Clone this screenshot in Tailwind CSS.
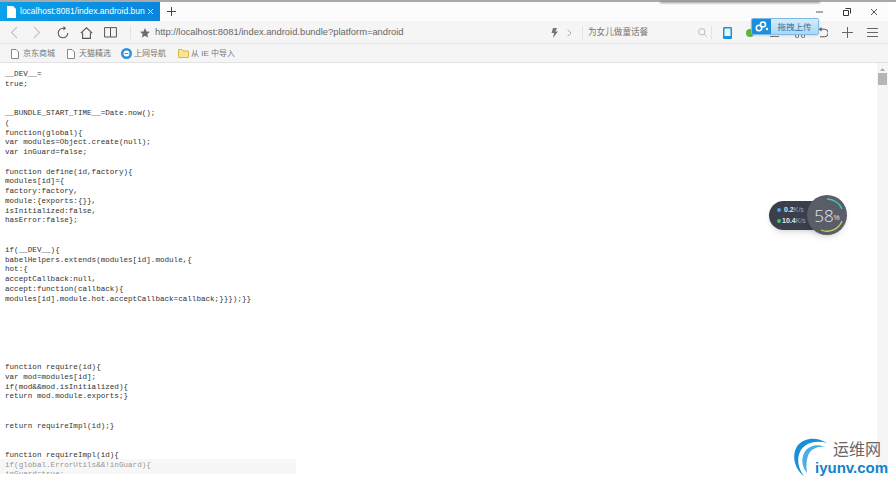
<!DOCTYPE html>
<html lang="en">
<head>
  <meta charset="UTF-8" />
  <title>localhost:8081/index.android.bundle</title>
  <script src="https://cdn.jsdelivr.net/npm/@tailwindcss/browser@4"></script>
</head>
<body class="relative w-[896px] h-[484px] overflow-hidden bg-white font-['Liberation_Sans','Noto_Sans_CJK_SC',sans-serif]">
  <!-- top edge -->
  <div class="h-[2px] bg-[#a9a9a9]"></div>
  <div class="w-[888px] h-[472px] flex flex-col overflow-hidden">

    <!-- tab bar -->
    <div class="h-[19px] shrink-0 flex items-center bg-[#fcfcfc]">
      <div class="w-[160px] h-full flex items-center pl-[7px] pr-[6px] bg-gradient-to-r from-[#0aa0ea] to-[#0a86dc] text-white">
        <svg class="w-[9px] h-[12px] shrink-0" viewBox="0 0 9 12"><path d="M0 0h6l3 3v9H0z" fill="#fff"/></svg>
        <span class="ml-[4px] w-[127px] overflow-hidden whitespace-nowrap text-[8.500px] leading-none">localhost:8081/index.android.bun</span>
        <svg class="ml-[2px] w-[7px] h-[7px] shrink-0" viewBox="0 0 7 7"><path d="M1 1l5 5M6 1L1 6" stroke="#cfe9fa" fill="none"/></svg>
      </div>
      <svg class="ml-[7px] w-[9px] h-[9px]" viewBox="0 0 9 9"><path d="M4.500 0v9M0 4.500h9" stroke="#444" fill="none"/></svg>
      <div class="ml-auto flex items-center text-[#444]">
        <svg class="w-[8px] h-[8px] mr-[19px]" viewBox="0 0 8 8"><path d="M0 4h7" stroke="#555" fill="none"/></svg>
        <svg class="w-[8px] h-[8px] mr-[19px]" viewBox="0 0 8 8"><path d="M2.500.5h5v5M.5 2.500h5v5h-5z" stroke="#333" fill="none"/></svg>
        <svg class="w-[8px] h-[8px] mr-[10px]" viewBox="0 0 8 8"><path d="M1 1l6 6M7 1L1 7" stroke="#555" fill="none"/></svg>
      </div>
    </div>

    <!-- address toolbar -->
    <div class="h-[23px] shrink-0 flex items-center pt-px bg-[#f5f5f5] border-b border-[#e4e4e4]">
      <svg class="ml-[10px] w-[8px] h-[13px]" viewBox="0 0 8 13"><path d="M7 1L1.500 6.500 7 12" stroke="#c6c6c6" stroke-width="1.200" fill="none"/></svg>
      <svg class="ml-[15px] w-[8px] h-[13px]" viewBox="0 0 8 13"><path d="M1 1l5.500 5.500L1 12" stroke="#c6c6c6" stroke-width="1.200" fill="none"/></svg>
      <svg class="ml-[16px] w-[12px] h-[13px]" viewBox="0 0 12 13"><path d="M10.800 7A4.800 4.800 0 1 1 6 2.200H8" stroke="#555" stroke-width="1.100" fill="none"/><path d="M6.500 0L9 2.200 6.500 4.400z" fill="#555"/></svg>
      <svg class="ml-[11px] w-[13px] h-[12px]" viewBox="0 0 13 12"><path d="M.8 6.200L6.500.8l5.700 5.400M2.600 5.400v6h7.800v-6" stroke="#555" stroke-width="1.100" fill="none"/></svg>
      <svg class="ml-[11px] w-[13px] h-[11px]" viewBox="0 0 13 11"><path d="M.6.6h5.900v9.400H.6zM6.500.6h5.900v9.400H6.500" stroke="#555" fill="none"/></svg>
      <div class="ml-[13px] w-px h-[13px] bg-[#e2e2e2]"></div>
      <svg class="ml-[9px] w-[10px] h-[10px]" viewBox="0 0 10 10"><path d="M5 0l1.500 3.400 3.500.3-2.700 2.300.8 3.600L5 7.700 1.900 9.600l.8-3.600L0 3.700l3.500-.3z" fill="#6a6a6a"/></svg>
      <span class="ml-[5px] w-[392px] text-[9.350px] leading-none whitespace-nowrap text-[#666]">http://localhost:8081/index.android.bundle?platform=android</span>
      <svg class="ml-[4px] w-[7px] h-[10px]" viewBox="0 0 7 10"><path d="M2 0h4L4.500 3.500H7L2 10l1-5H.5z" fill="#777"/></svg>
      <svg class="ml-[9px] w-[5px] h-[8px]" viewBox="0 0 5 8"><path d="M.6.6L4 4 .6 7.400" stroke="#aaa" fill="none"/></svg>
      <div class="ml-[10px] w-px h-[13px] bg-[#e2e2e2]"></div>
      <span class="ml-[5px] w-[110px] text-[8.600px] leading-none text-[#777]">为女儿做童话餐</span>
      <svg class="w-[9px] h-[9px]" viewBox="0 0 9 9"><circle cx="3.800" cy="3.800" r="3.200" stroke="#bbb" fill="none"/><path d="M6.200 6.200L8.700 8.700" stroke="#bbb" fill="none"/></svg>
      <div class="ml-[4px] w-px h-[13px] bg-[#e2e2e2]"></div>
      <svg class="ml-[11px] w-[9px] h-[12px]" viewBox="0 0 9 12"><rect width="9" height="12" rx="1.200" fill="#1596d8"/><rect x="1.500" y="1.500" width="6" height="7.500" fill="#e8f5fc"/></svg>
      <svg class="ml-[14px] w-[8px] h-[8px]" viewBox="0 0 8 8"><circle cx="4" cy="4" r="4" fill="#63b33a"/></svg>
      <svg class="ml-[64px] w-[10px] h-[11px]" viewBox="0 0 10 11"><path d="M3 2.200h3.500a3.500 3.500 0 0 1 0 7.600H2" stroke="#555" fill="none"/><path d="M3.500 0v4.400L.800 2.200z" fill="#555"/></svg>
      <svg class="ml-[14px] w-[11px] h-[11px]" viewBox="0 0 11 11"><path d="M5.500 0v11M0 5.500h11" stroke="#666" fill="none"/></svg>
      <svg class="ml-[14px] w-[11px] h-[9px]" viewBox="0 0 11 9"><path d="M0 .5h11M0 4.500h11M0 8.500h11" stroke="#666" fill="none"/></svg>
    </div>

    <!-- bookmarks -->
    <div class="h-[19px] shrink-0 flex items-center pt-px bg-[#f5f5f5] border-b border-[#e2e2e2] text-[8px] leading-none text-[#777]">
      <svg class="ml-[11px] w-[8px] h-[10px]" viewBox="0 0 8 10"><path d="M.5.500h4.500l2.500 2.500v6.500h-7z" stroke="#888" fill="#fff"/></svg>
      <span class="ml-[4px]">京东商城</span>
      <svg class="ml-[12px] w-[8px] h-[10px]" viewBox="0 0 8 10"><path d="M.5.500h4.500l2.500 2.500v6.500h-7z" stroke="#888" fill="#fff"/></svg>
      <span class="ml-[4px]">天猫精选</span>
      <svg class="ml-[10px] w-[11px] h-[11px]" viewBox="0 0 11 11"><circle cx="5.500" cy="5.500" r="5.500" fill="#2f8fd8"/><circle cx="5.500" cy="5.500" r="3" fill="#fff"/><path d="M3.500 5.500h4" stroke="#2f8fd8" fill="none"/></svg>
      <span class="ml-[2px]">上网导航</span>
      <svg class="ml-[12px] w-[11px] h-[9px]" viewBox="0 0 11 9"><path d="M.5 1V8.500h10V2H5L4 .5H.500z" stroke="#dcb64a" fill="#f9e596"/></svg>
      <span class="ml-[2px]">从 IE 中导入</span>
    </div>

    <!-- page with bundle source -->
    <div class="flex-1 min-h-0 flex overflow-hidden">
      <pre class="flex-1 m-0 pl-[5px] pt-[7px] overflow-hidden font-['Liberation_Mono','DejaVu_Sans_Mono',monospace] text-[7.600px] leading-[9.760px] text-[#333]">__DEV__=
true;


__BUNDLE_START_TIME__=Date.now();
(
function(global){
var modules=Object.create(null);
var inGuard=false;

function define(id,factory){
modules[id]={
factory:factory,
module:{exports:{}},
isInitialized:false,
hasError:false};


if(__DEV__){
babelHelpers.extends(modules[id].module,{
hot:{
acceptCallback:null,
accept:function(callback){
modules[id].module.hot.acceptCallback=callback;}}});}}






function require(id){
var mod=modules[id];
if(mod&amp;&amp;mod.isInitialized){
return mod.module.exports;}


return requireImpl(id);}


function requireImpl(id){
if(global.ErrorUtils&amp;&amp;!inGuard){
inGuard=true;</pre>
      <!-- scrollbar -->
      <div class="w-[11px] shrink-0 flex flex-col items-center bg-[#f5f5f5]">
        <svg class="mt-[5px] w-[5px] h-[3px]" viewBox="0 0 5 3"><path d="M2.500 0L5 3H0z" fill="#aaa"/></svg>
        <div class="mt-[2px] w-[9px] h-[12px] bg-[#b5b5b5]"></div>
      </div>
    </div>
  </div>

  <!-- soft shadow of something above the window -->
  <div class="absolute left-[660px] top-[1px] w-[160px] h-[2px] bg-[#8f8f8f] blur-[1px]"></div>

  <!-- toolbar icons half hidden by the upload button -->
  <div class="absolute left-[770px] top-[36px] w-[9px] h-px bg-[#777]"></div>
  <div class="absolute left-[795px] top-[35px] w-[4px] h-[3px] rounded-b-full border border-t-0 border-[#777]"></div>
  <div class="absolute left-[801px] top-[35px] w-[4px] h-[3px] rounded-b-full border border-t-0 border-[#777]"></div>

  <!-- upload button over the toolbar -->
  <div class="absolute left-[751px] top-[18px] w-[68px] h-[17px] flex items-stretch rounded-[2px] border border-[#7dbbe6] overflow-hidden shadow-sm">
    <div class="w-[19px] flex items-center justify-center bg-[#1c8fdc]">
      <svg class="w-[14px] h-[11px]" viewBox="0 0 14 11"><circle cx="4" cy="7" r="2.700" stroke="#fff" stroke-width="1.600" fill="none"/><circle cx="8" cy="3.500" r="2.500" stroke="#fff" stroke-width="1.600" fill="none"/><circle cx="12" cy="8" r="1.200" fill="#fff"/></svg>
    </div>
    <div class="flex-1 flex items-center justify-center pt-px bg-gradient-to-b from-[#d5ecfb] to-[#a9d8f6] text-[8.500px] leading-none text-[#3b6f9c]">拖拽上传</div>
  </div>

  <!-- network speed widget -->
  <div class="absolute left-[769px] top-[201px] w-[56px] h-[29px] rounded-l-full bg-[#3a3f4b] text-[7px] leading-[11px] font-bold text-[#e5e7eb] pl-[8px] pt-[3px] shadow-md">
    <div class="flex items-center"><span class="w-[4px] h-[4px] mr-[3px] rounded-full bg-[#4aa6dd]"></span>0.2<span class="font-normal text-[#9aa0aa]">K/s</span></div>
    <div class="flex items-center"><span class="w-[4px] h-[4px] mr-[1px] rounded-full bg-[#4fbf6a]"></span>10.4<span class="font-normal text-[#9aa0aa]">K/s</span></div>
  </div>
  <div class="absolute left-[807px] top-[195px] w-[40px] h-[40px] rounded-full bg-[#585d68] shadow-md flex items-center justify-center text-[#e8e8ec]">
    <svg class="absolute inset-0 w-[40px] h-[40px]" viewBox="0 0 40 40"><path d="M20 4a16 16 0 0 1 15 10" stroke="#45c8b4" stroke-width="1.300" fill="none"/><path d="M35 26a16 16 0 0 1-21 9" stroke="#c8d35a" stroke-width="1.300" fill="none"/></svg>
    <span class="text-[17px] leading-none font-['Open_Sans',sans-serif] font-light">58</span><span class="text-[7px] leading-none mt-[5px]">%</span>
  </div>

  <!-- gray strip over the page text -->
  <div class="absolute left-0 top-[459px] w-[296px] h-[15px] bg-[#efefef]/50"></div>

  <!-- watermark -->
  <svg class="absolute left-[792px] top-[437px] w-[36px] h-[40px]" viewBox="0 0 36 40">
    <path d="M12 39C2 32-1 17 6 8 12 1 24-1 35 6 25 3 14 5 9 13 4 21 6 32 12 39z" fill="#1690d8"/>
    <path d="M15 36C9 29 9 19 14 13c5-5 12-6 19-3-6-1-12 1-15 5-4 6-4 14-3 21z" fill="#49ade6"/>
  </svg>
  <div class="absolute left-[833px] top-[442px] text-[16px] leading-none text-[#666]">运维网</div>
  <div class="absolute left-[815px] top-[460px] text-[15px] leading-none font-bold text-[#1282cc]">iyunv.com</div>
</body>
</html>
